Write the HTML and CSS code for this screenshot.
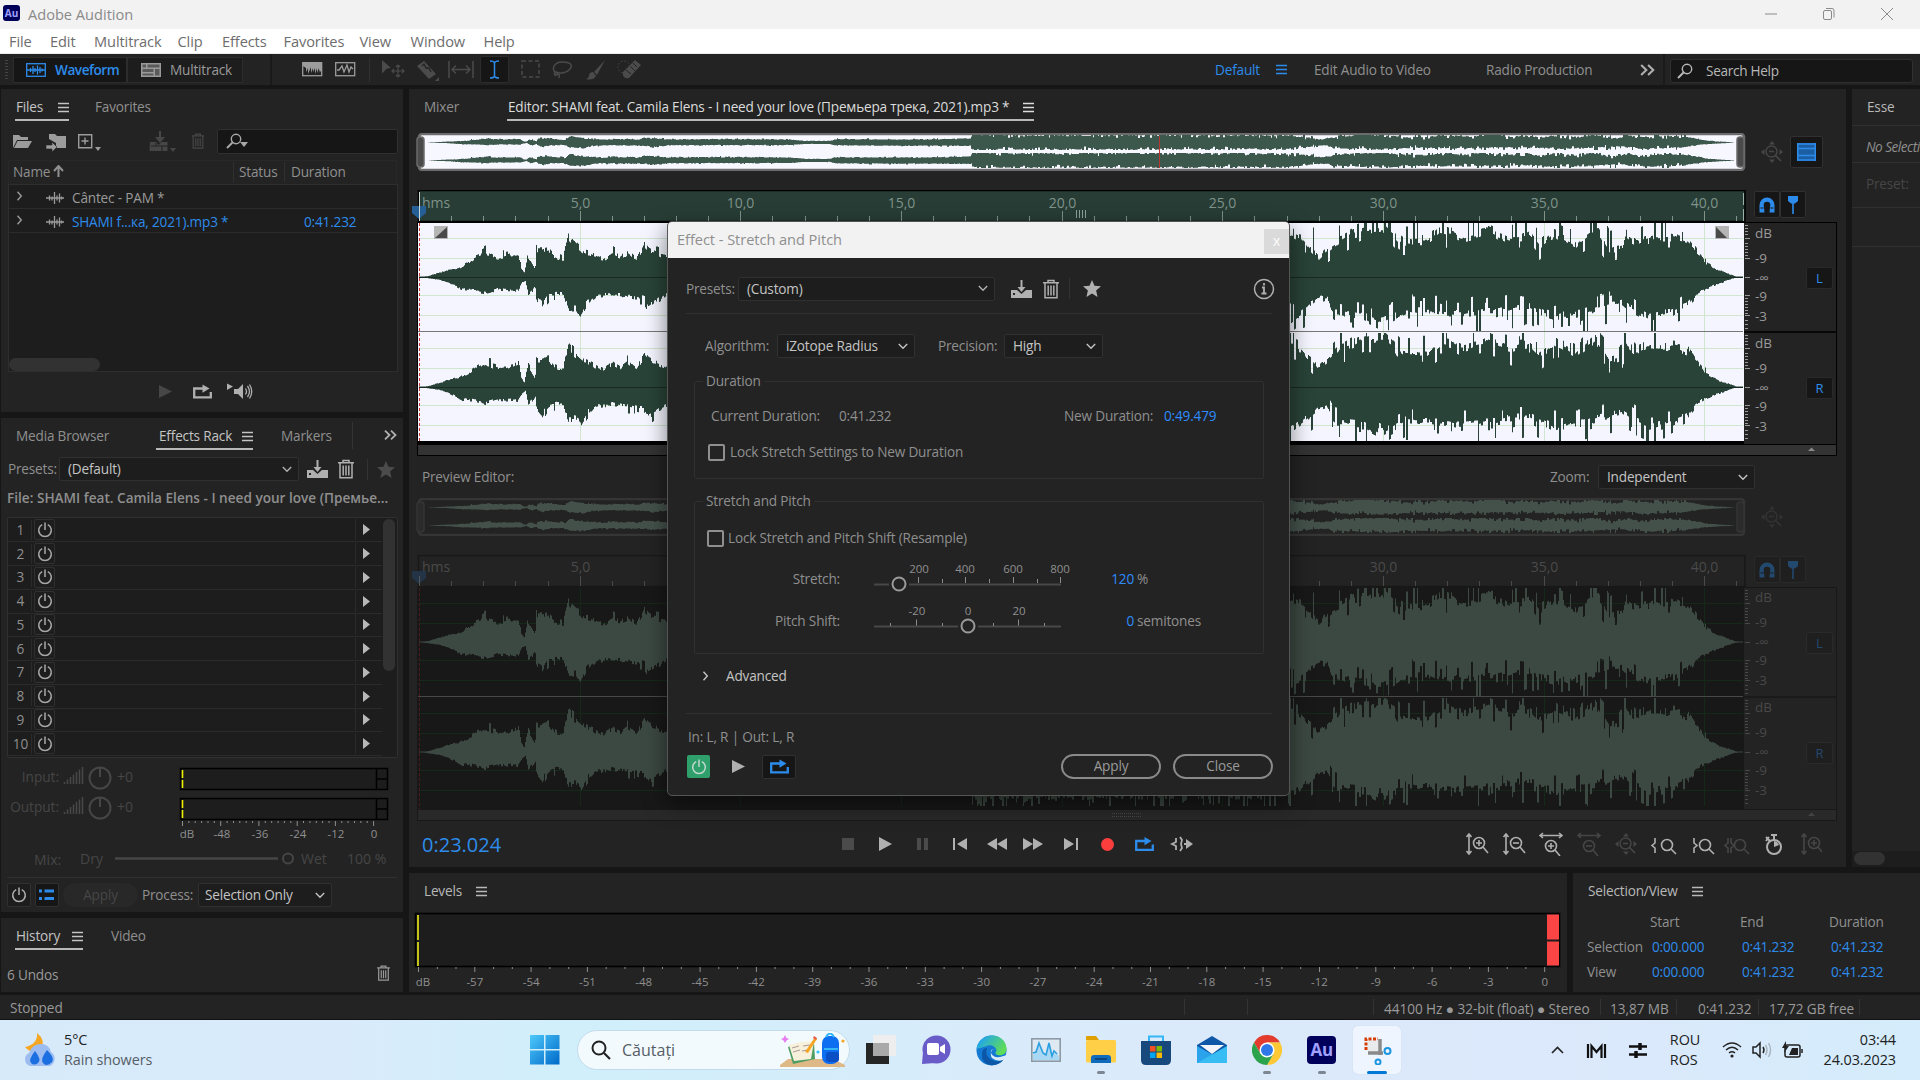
FILE: index.html
```html
<!DOCTYPE html>
<html lang="en">
<head>
<meta charset="utf-8">
<title>Adobe Audition</title>
<link rel="stylesheet" href="styles.css">
</head>
<body>
<svg class="defs" width="0" height="0">
  <symbol id="burger" viewBox="0 0 11 11"><path d="M0 1.5h11M0 5.5h11M0 9.5h11" stroke="currentColor" stroke-width="1.4"/></symbol>
  <symbol id="chev" viewBox="0 0 10 7"><path d="M.8 1l4.2 4.2L9.2 1" fill="none" stroke="currentColor" stroke-width="1.4"/></symbol>
  <symbol id="chevr" viewBox="0 0 7 10"><path d="M1.5 .8l3.8 4.2-3.8 4.2" fill="none" stroke="currentColor" stroke-width="1.4"/></symbol>
  <symbol id="more" viewBox="0 0 13 10"><path d="M1 .7l4.5 4.3L1 9.3M7 .7l4.5 4.3L7 9.3" fill="none" stroke="currentColor" stroke-width="1.8"/></symbol>
  <symbol id="power" viewBox="0 0 16 16"><path d="M5.2 2.6a6.3 6.3 0 1 0 5.6 0M8 .5v7.5" fill="none" stroke="currentColor" stroke-width="1.5"/></symbol>
  <symbol id="trash" viewBox="0 0 16 20"><path d="M0 3.7h16M5 3.5v-2h6v2M2 4v14.8h12V4M5.2 6.5v10M8 6.5v10M10.8 6.5v10" fill="none" stroke="currentColor" stroke-width="1.5"/></symbol>
  <symbol id="save" viewBox="0 0 21 18"><path d="M0 10h6l4.500 4 4.500-4h6v8H0z" fill="currentColor"/><path d="M10.500 0v10" stroke="currentColor" stroke-width="2"/><path d="M6.500 7h8l-4 5z" fill="currentColor"/><rect x="2" y="13" width="2" height="2" fill="#232323"/></symbol>
  <symbol id="star" viewBox="0 0 18 17"><path d="M9 0l2.500 5.800 6.500.5-4.900 4.200 1.500 6.500L9 13.500 3.400 17l1.500-6.500L0 6.300l6.500-.5z" fill="currentColor"/></symbol>
  <symbol id="play" viewBox="0 0 13 13"><path d="M0 0l13 6.500L0 13z" fill="currentColor"/></symbol>
  <symbol id="loop" viewBox="0 0 19 14"><path d="M5 4H1.200v8.800h16.600V7.500M4 4h7" fill="none" stroke="currentColor" stroke-width="2.300"/><path d="M9.500 0l7 4-7 4.300z" fill="currentColor"/></symbol>
  <symbol id="speaker" viewBox="0 0 27 16"><path d="M0 0l6 3-6 3.500zM7 5.500h4l5-5v15l-5-5H7z" fill="currentColor"/><path d="M18.500 5q2 3 0 6M20.500 2.500q4 5.500 0 11M22.500 1q4.500 7 0 14" fill="none" stroke="currentColor" stroke-width="1.300"/></symbol>
  <symbol id="mag" viewBox="0 0 16 16"><circle cx="10" cy="6" r="4.700" fill="none" stroke="currentColor" stroke-width="1.400"/><path d="M6.500 9.500L1 15" stroke="currentColor" stroke-width="2"/></symbol>
  <symbol id="wave" viewBox="0 0 18 12"><path d="M0 6h18M3.500 3.500v5M6 4.500v4M8.500 0v12M11 3.500v5M13.500 1.500v9M15.500 4.500v3" stroke="currentColor" stroke-width="1.300"/></symbol>
  <symbol id="navz" viewBox="0 0 22 22"><path d="M11 0l3 3.500H8zM11 22l3-3.500H8zM0 11l3.500-3v6zM22 11l-3.500-3v6z" fill="currentColor"/><circle cx="10.500" cy="10.500" r="5.500" fill="none" stroke="currentColor" stroke-width="1.400"/><path d="M8 10.500h5M14.500 14.500l5.500 5.500" stroke="currentColor" stroke-width="1.700"/></symbol>
  <symbol id="magnet" viewBox="0 0 16 16"><path d="M.5 15.500V8a7.500 7.500 0 0 1 15 0v7.500h-5l.8-7.500a3.300 3.300 0 0 0-6.600 0l.8 7.500z" fill="currentColor"/><path d="M1.500 11h3M11.500 11h3" stroke="#161616"/></symbol>
  <symbol id="pin" viewBox="0 0 10 18"><path d="M0 0h10v5L7 7.500H3L0 5z" fill="currentColor"/><path d="M5 6v12" stroke="currentColor" stroke-width="1.600"/></symbol>
</svg>

<header class="titlebar">
  <span class="aulogo small">Au</span><span class="title">Adobe Audition</span>
  <svg class="winbtns" viewBox="0 0 132 14"><path d="M3 7h12M119 1l12 12M131 1l-12 12" stroke="#8a8a8a" fill="none"/><rect x="61.500" y="3.500" width="8" height="9" rx="1.500" fill="none" stroke="#8a8a8a"/><path d="M64 1.500h6q2 0 2 2v7" fill="none" stroke="#8a8a8a"/></svg>
</header>
<nav class="menubar"><span>File</span><span>Edit</span><span>Multitrack</span><span>Clip</span><span>Effects</span><span>Favorites</span><span>View</span><span>Window</span><span>Help</span></nav>

<div class="toolbar">
  <span class="dots"></span>
  <div class="mode on"><svg width="20" height="14" viewBox="0 0 20 14"><rect x=".7" y=".7" width="18.600" height="12.600" fill="none" stroke="currentColor" stroke-width="1.300"/><path d="M1 7h18M4.500 5v4M7 3v8M9 5v4M11.500 2.500v9M14 4v6M16 5.500v3" stroke="currentColor" stroke-width="1.300"/></svg><span>Waveform</span></div>
  <div class="mode multi"><svg width="20" height="14" viewBox="0 0 20 14"><path d="M0 0h20v14H0z" fill="#9a9a9a"/><path d="M1.500 1.500h3.500v3h-3.500zM6.500 1.500h12v3h-12zM1.500 6h11v3h-11zM14 6h4.500v6.500H14zM1.500 10.500h11v2h-11z" fill="#5a5a5a"/></svg><span>Multitrack</span></div>
  <i class="vline v1"></i>
  <svg class="tools" width="370" height="31" viewBox="0 0 370 31">
    <g fill="none" stroke="#9c9c9c"><rect x="28.700" y="8.700" width="19" height="13" stroke-width="1.300"/><path d="M29 8h19v8l-2 2v-3l-1 4v-5l-2 5v-5l-2 6v-6l-2 4v-4l-2 5v-6l-3 7v-6l-2 4v-4l-3-2z" fill="#9c9c9c" stroke="none"/><rect x="61.700" y="8.700" width="19" height="13" stroke-width="1.300"/><path d="M63 16l2 0 3-4 2 6 3-7 2 7 2-5 2 2" stroke-width="1.300"/></g>
    <path d="M95.500 3v25" stroke="#303030"/>
    <g fill="#4b4b4b" stroke="#4b4b4b">
      <path d="M108 6l9 8-4 .500-5 5z" stroke="none"/><path d="M124 11v12M118 17h12M122 13l2-2 2 2M122 21l2 2 2-2M120 15l-2 2 2 2M128 15l2 2-2 2" fill="none" stroke-width="1.200"/>
      <path d="M143 12l7-5 12 13-7 5z" stroke="none"/><path d="M148 12l2-2 2 4 3 0 2 4" stroke="#232323" stroke-width="1.300" fill="none"/><path d="M161 27h4v-4z" stroke="none"/>
      <path d="M175 7v17M199 7v17M178 15.500h18M182 11.500l-4 4 4 4M192 11.500l4 4-4 4" fill="none" stroke-width="1.500"/>
    </g>
    <rect x="206.500" y="2.500" width="28" height="26" rx="2" fill="#161616" stroke="#2c2c2c"/>
    <path d="M216 7q4 0 4.500 2 .5-2 4.500-2M216 24q4 0 4.500-2 .5 2 4.500 2M220.500 9v13" fill="none" stroke="#2d8ceb" stroke-width="1.500"/>
    <g fill="none" stroke="#4b4b4b" stroke-width="1.500"><rect x="248" y="7" width="17" height="16" stroke-dasharray="4 2.500"/><path d="M284 19c-8-1-5-11 4-11s11 3 8 7-10 5-14 3c-2 0-2 4 0 3s4-2 3 3"/></g>
    <path d="M331 6l-11 12 3 3zM319 18l3 4q-3 5-10 3 3-1 3-4 1-3 4-3z" fill="#4b4b4b"/>
    <path d="M349 18l12-12 6 5-12 13q-3 1-5-1t-1-5z" fill="#4b4b4b"/><path d="M352 16l5 4M356 12l5 5M359 9l4 4" stroke="#232323"/><circle cx="350" cy="13" r="6" fill="none" stroke="#4b4b4b" stroke-dasharray="1.500 2"/>
  </svg>
  <div class="spaces"><span class="blue">Default</span><svg class="ic blue" width="11" height="11"><use href="#burger"/></svg><span>Edit Audio to Video</span><span>Radio Production</span><svg class="ic lite" width="15" height="12"><use href="#more"/></svg></div>
  <i class="vline v2"></i>
  <div class="search"><svg width="16" height="16"><use href="#mag"/></svg><span>Search Help</span></div>
</div>

<main class="work">
  <section class="left">
    <div class="panel files">
      <div class="tabs t-files"><span class="tab on">Files <svg class="ic" width="11" height="11"><use href="#burger"/></svg></span><span class="tab">Favorites</span></div>
      <div class="filetools">
        <svg width="198" height="24" viewBox="0 0 198 24">
          <g fill="#9c9c9c"><path d="M5 6h6l2 2h7v3H9l-4 8z"/><path d="M9.500 12H24l-4 7H6z"/><path d="M41 5h6l2 2h9v12H48v-5l-7-4z"/><path d="M38 20v-4h6v-3l5 5-5 5v-3z" stroke="#232323" stroke-width=".6"/><path d="M87 18h6l-3 4z"/></g>
          <path d="M70.700 5.700h13v13h-13zM77 8.500v7M73.500 12h7" fill="none" stroke="#9c9c9c" stroke-width="1.400"/>
          <g fill="#464646"><path d="M142 13h6l2.500 3 3-3h6v9h-18z"/><path d="M153 2v6h4l-5 6-5-6h4V2zM162 19h6l-3 4z"/></g><path d="M143 17h17M148 17v-3M154 22v-5" stroke="#232323"/>
        </svg>
        <svg class="dim trash1" width="14" height="16" viewBox="0 0 16 20"><use href="#trash"/></svg>
        <div class="box fsearch"><svg width="16" height="16"><use href="#mag"/></svg><b class="tri"></b></div>
      </div>
      <div class="thead"><span>Name<svg width="11" height="12" viewBox="0 0 11 12"><path d="M5.500 12V2M1 6l4.500-5L10 6" fill="none" stroke="currentColor" stroke-width="2"/></svg></span><span>Status</span><span>Duration</span></div>
      <div class="flist">
        <div class="frow"><svg width="7" height="10"><use href="#chevr"/></svg><svg width="18" height="12"><use href="#wave"/></svg><span>Cântec - PAM *</span></div>
        <div class="frow"><svg width="7" height="10"><use href="#chevr"/></svg><svg width="18" height="12"><use href="#wave"/></svg><span class="blue">SHAMI f...ка, 2021).mp3 *</span><span class="blue">0:41.232</span></div>
        <div class="hthumb"></div>
      </div>
      <div class="fplay"><svg class="dim" width="13" height="13"><use href="#play"/></svg><svg width="19" height="15"><use href="#loop"/></svg><svg width="27" height="17"><use href="#speaker"/></svg></div>
    </div>

    <div class="panel rack">
      <div class="tabs t-rack"><span class="tab">Media Browser</span><span class="tab on">Effects Rack <svg class="ic" width="11" height="11"><use href="#burger"/></svg></span><span class="tab">Markers</span><i class="tline"></i><svg class="ic lite" width="13" height="10"><use href="#more"/></svg></div>
      <div class="presets"><span>Presets:</span><div class="box sel">(Default)<svg width="10" height="7"><use href="#chev"/></svg></div><svg width="21" height="18"><use href="#save"/></svg><svg width="16" height="20"><use href="#trash"/></svg><i class="sline"></i><svg class="dim" width="18" height="17"><use href="#star"/></svg></div>
      <div class="rfile">File: SHAMI feat. Camila Elens - I need your love (Премье...</div>
      <div class="rlist"><div class="rows" id="rackRows"></div><div class="vthumb"></div></div>
      <svg class="io" width="402" height="120" viewBox="0 0 402 120" id="ioMeters"></svg>
      <div class="rfoot"><span class="sq"><svg width="16" height="16"><use href="#power"/></svg></span><span class="sq ondark"><svg width="16" height="12" viewBox="0 0 16 12"><path d="M0 2h3M0 9.500h3M5.500 2H15M5.500 9.500H15" stroke="#2d8ceb" stroke-width="3"/></svg></span><span class="gpill">Apply</span><span>Process:</span><div class="box sel">Selection Only<svg width="10" height="7"><use href="#chev"/></svg></div></div>
    </div>

    <div class="panel hist">
      <div class="tabs t-hist"><span class="tab on">History <svg class="ic" width="11" height="11"><use href="#burger"/></svg></span><span class="tab">Video</span></div>
      <div class="undos"><span>6 Undos</span><svg width="13" height="16" viewBox="0 0 16 20"><use href="#trash"/></svg></div>
    </div>
  </section>

  <section class="mid">
    <div class="panel editor">
      <div class="tabs t-edit"><span class="tab">Mixer</span><span class="tab on bright">Editor: SHAMI feat. Camila Elens - I need your love (Премьера трека, 2021).mp3 * <svg class="ic" width="11" height="11"><use href="#burger"/></svg></span></div>
      <div class="ovrow"><svg class="ov" width="1330" height="38" data-overview="main"></svg><svg class="dim navz" width="22" height="22"><use href="#navz"/></svg><span class="sq big"><svg width="19" height="18" viewBox="0 0 19 18"><path d="M0 0h19v18H0z" fill="#1c5ea3"/><path d="M0 1h19M0 5.500h19M0 12.500h19M0 17h19M.7 0v18M18.300 0v18" stroke="#2d8ceb" stroke-width="1.600"/></svg></span></div>
      <div class="rulerrow"><svg class="ruler" width="1336" height="32" data-ruler="main"></svg><span class="sq tg"><svg width="16" height="16"><use href="#magnet"/></svg></span><span class="sq tg"><svg width="10" height="18"><use href="#pin"/></svg></span></div>
      <svg class="wave" width="1421" height="234" data-wave="main"></svg>
      <div class="prevhead"><span>Preview Editor:</span><span class="zl">Zoom:</span><div class="box sel">Independent<svg width="10" height="7"><use href="#chev"/></svg></div></div>
      <div class="ovrow"><svg class="ov" width="1330" height="38" data-overview="dim"></svg><svg class="dim navz faint" width="22" height="22"><use href="#navz"/></svg></div>
      <div class="rulerrow faded"><svg class="ruler" width="1336" height="32" data-ruler="dim"></svg><span class="sq tg"><svg width="16" height="16"><use href="#magnet"/></svg></span><span class="sq tg"><svg width="10" height="18"><use href="#pin"/></svg></span></div>
      <svg class="wave" width="1421" height="234" data-wave="dim"></svg>
      <div class="transport">
        <span class="time">0:23.024</span>
        <svg class="tbtns" width="352" height="18" viewBox="0 0 352 18"><g fill="#b0b0b0"><path d="M0 3h12v12H0zM75 3h4v12h-4zM82 3h4v12h-4z" fill="#4b4b4b"/><path d="M37 2l13 7-13 7zM111 3h2v12h-2zM125 3v12l-10-6zM155 3v12l-10-6zM165 3v12l-10-6zM181 3v12l10-6zM191 3v12l10-6zM222 3v12l10-6zM234 3h2v12h-2z"/></g><circle cx="265.500" cy="9.500" r="6.500" fill="#fa3e3e"/><g color="#2d8ceb"><svg x="293" y="2" width="19" height="14"><use href="#loop"/></svg></g><path d="M334 3v4l-4 2 4 2v4M338 2l2 3-1 4 1 4-2 3M342 9h6" fill="none" stroke="#b0b0b0" stroke-width="1.800"/><path d="M344 4l7 5-7 5z" fill="#b0b0b0"/></svg>
        <svg class="zbtns" width="356" height="24" viewBox="0 0 356 24" id="zoomIcons"></svg>
      </div>
    </div>
    <div class="lower">
      <div class="panel levels"><div class="ptitle">Levels <svg class="ic" width="11" height="11"><use href="#burger"/></svg></div><svg width="1158" height="84" viewBox="0 0 1158 84" id="levelMeter"></svg></div>
      <div class="panel selview"><div class="ptitle">Selection/View <svg class="ic" width="11" height="11"><use href="#burger"/></svg></div>
        <div class="svgrid"><span></span><span class="h">Start</span><span class="h">End</span><span class="h">Duration</span><span>Selection</span><span class="blue">0:00.000</span><span class="blue">0:41.232</span><span class="blue">0:41.232</span><span>View</span><span class="blue">0:00.000</span><span class="blue">0:41.232</span><span class="blue">0:41.232</span></div>
      </div>
    </div>
  </section>

  <section class="panel right"><div class="r1">Esse</div><div class="r2">No Selecti</div><div class="r3">Preset:</div><div class="r4"></div><div class="rscroll"><i></i></div></section>
</main>

<footer class="status"><span class="stopped">Stopped</span><span class="s1"></span><span class="s2"></span><span class="s3">44100 Hz ● 32-bit (float) ● Stereo</span><span class="s4">13,87 MB</span><span class="s5">0:41.232</span><span class="s6">17,72 GB free</span><span class="s7"></span></footer>

<div class="taskbar">
  <svg class="weather" width="32" height="36" viewBox="0 0 32 36"><path d="M13 1q1 11-12 14 5 6 13 4 8-5 3-14-2-2-4-4z" fill="#f5a623"/><path d="M6 34a7 7 0 0 1-1-13q3-9 12-9 8 0 10 8a8 8 0 0 1-1 14z" fill="#9dbdf0"/><path d="M11 19q-7 9-4 12t7 0-3-12zM23 18q-7 9-4 13t8 0-4-13z" fill="#1b6fe0"/></svg>
  <div class="wtext"><span class="dark">5°C</span><span>Rain showers</span></div>
  <svg class="start" width="30" height="30"><defs><linearGradient id="wg" x1="0" y1="0" x2="1" y2="1"><stop offset="0" stop-color="#4cc9fb"/><stop offset="1" stop-color="#0069c8"/></linearGradient></defs><path d="M0 0h14v14H0zM15.500 0h14v14h-14zM0 15.500h14v14H0zM15.500 15.500h14v14h-14z" fill="url(#wg)"/></svg>
  <div class="tsearch"><svg width="20" height="20" viewBox="0 0 20 20"><circle cx="8" cy="8" r="6.500" fill="none" stroke="#222" stroke-width="2"/><path d="M13 13l6 6" stroke="#222" stroke-width="2.200"/></svg><span>Căutați</span>
    <svg class="art" width="66" height="34" viewBox="0 0 66 34"><path d="M8 26h45l12 6v2H0v-2z" fill="#deb887"/><path d="M8 14l10-4 16 0 1 16-22 5z" fill="#4f9d62"/><path d="M9 12l12-3 13-1-3 18-17 2z" fill="#f7f1dc"/><path d="M12 15l7-2M13 19l7-2M23 13l7-1M22 18l6-1" stroke="#a99"/><path d="M35 4l2 2-9 14-3-1z" fill="#f5a623"/><path d="M34 3l3 2-1 2-3-2z" fill="#e85a4f"/><rect x="42" y="3" width="17" height="28" rx="7" fill="#0d6ef2"/><rect x="46" y="19" width="13" height="10" rx="3" fill="#0a4fc4"/><path d="M46 4q4-7 8 0M44 16h14" stroke="#35b6f5" stroke-width="2" fill="none"/><path d="M5 2l1.500 3L9 6 6.500 7.500 5 10 3.500 7.500 1 6l2.500-1z" fill="#e67cf0"/><circle cx="38" cy="19" r="1.600" fill="#35c6f5"/><circle cx="63" cy="8" r="1.600" fill="#f5a623"/></svg>
  </div>
  <div class="apps">
    <span><svg width="30" height="30"><path d="M0 8h23v21H0z" fill="#262626"/><path d="M7 0h23v21H7z" fill="#eee"/><path d="M7 8h16v13H7z" fill="#a9a9a9"/></svg></span>
    <span><svg width="30" height="30"><circle cx="15.500" cy="14.500" r="14" fill="#6a5cc8"/><path d="M1 29l1-12 12 11z" fill="#6a5cc8"/><rect x="6" y="8" width="12" height="12" rx="2" fill="#fff"/><path d="M19 12l5-3v10l-5-3z" fill="#fff"/></svg></span>
    <span><svg width="31" height="31" viewBox="0 0 31 31"><defs><linearGradient id="eg" x1="0" y1="0" x2="1" y2=".5"><stop offset=".2" stop-color="#22a7e8"/><stop offset="1" stop-color="#5fdc58"/></linearGradient></defs><circle cx="15.500" cy="15.500" r="15" fill="#1479d2"/><path d="M.5 14C3-4 30-4 30.500 14c0 5-4 7-9 6-2-1-3-2-1-4 0-4-5-7-10-5S2 13 .5 14z" fill="url(#eg)"/><path d="M11 13q-3 8 5 12 6 3 12-1-5 7-14 6-9-2-8-11 0-6 5-6z" fill="#0d57a8"/><path d="M19 14q-5 0-4 4 2 5 9 4l7-2v3l-4 2q-6 2-11-2-3-5 1-9z" fill="#dcebf9"/></svg></span>
    <span><svg width="30" height="24"><rect x=".8" y=".8" width="28.400" height="22.400" fill="#dfe9f2" stroke="#8c9aa6" stroke-width="1.600"/><path d="M2 17l4-4 2-8 4 10 3 2 3-12 3 12 4-2 3 3v4H2z" fill="#a8d8f4"/><path d="M2 15l3-1 3-9 4 10 3 2 3-12 3 13 2-5 3 3" fill="none" stroke="#2b9fe0" stroke-width="1.600"/></svg></span>
    <span class="run"><svg width="30" height="28"><path d="M0 1q0-1 1-1h9l3 4H0z" fill="#e0a000"/><rect y="4" width="30" height="22.500" rx="1.500" fill="#ffcf48"/><path d="M5 27v-5q0-3 3-3h14q3 0 3 3v5z" fill="#0f6cbd"/><path d="M9 23h12" stroke="#0a3f75" stroke-width="1.600"/></svg></span>
    <span><svg width="30" height="30"><path d="M8 6V1.500h14V6" fill="none" stroke="#35b6f5" stroke-width="2"/><path d="M0 6h30v19q0 5-5 5H5q-5 0-5-5z" fill="#17497d"/><path d="M9 11h5.500v5.500H9z" fill="#f25022"/><path d="M15.500 11H21v5.500h-5.500z" fill="#7fba00"/><path d="M9 17.500h5.500V23H9z" fill="#00a4ef"/><path d="M15.500 17.500H21V23h-5.500z" fill="#ffb900"/></svg></span>
    <span><svg width="30" height="30"><path d="M0 10L15 1l15 9v18H0z" fill="#0f58a8"/><path d="M0 11l30 17H0z" fill="#2aa3ec"/><path d="M30 11L0 28h30z" fill="#37bdf3"/><path d="M3 10h24L15 19z" fill="#f2f6fa"/></svg></span>
    <span class="run"><svg width="30" height="30" viewBox="-15 -15 30 30"><path d="M-13-7.500A15 15 0 0 1 13-7.500H0L-6.500 3.800z" fill="#e33b2e"/><path d="M13-7.500A15 15 0 0 1 0 15L6.500 3.800 0-7.500z" fill="#fcc934"/><path d="M-13-7.500A15 15 0 0 0 0 15L6.500 3.800h-13z" fill="#2ba24c"/><circle r="7.500" fill="#fff"/><circle r="6" fill="#2f78e8"/></svg></span>
    <span class="run"><b class="aulogo">Au</b></span>
    <span class="active"><svg width="30" height="30"><path d="M4 15V4h12" fill="none" stroke="#d83b01" stroke-width="3" stroke-dasharray="3 1.500"/><path d="M6 6h12v11H6z" fill="#e9eaec"/><path d="M18 4v16M6 18h15" stroke="#8a8a8a" stroke-width="3.500"/><circle cx="25.500" cy="16" r="3" fill="none" stroke="#1b95e0" stroke-width="2"/><circle cx="16" cy="27" r="2.500" fill="none" stroke="#1b95e0" stroke-width="2"/></svg></span>
  </div>
  <svg class="tray" width="100" height="18" viewBox="0 0 100 18"><path d="M2 12l5.500-5.500L13 12" fill="none" stroke="#222" stroke-width="1.600"/><path d="M38 3v14M55 3v14M41.500 17V5l5 6 5-6v12" stroke="#111" stroke-width="2.200" fill="none"/><path d="M79 5.500h18M79 13.500h18" stroke="#111" stroke-width="2.400"/><path d="M90 2v7M86 10v7" stroke="#111" stroke-width="3.500"/></svg>
  <div class="lang"><span>ROU</span><span>ROS</span></div>
  <svg class="sys" width="82" height="20" viewBox="0 0 82 20"><g fill="none" stroke="#222" stroke-width="1.500"><path d="M1 7q9-8 18 0M4 10q6-5.500 12 0M7 13q3-2.500 6 0"/><path d="M31 7h3l4-4v14l-4-4h-3zM41 7q2 3 0 6"/><path d="M43.500 5q3 5 0 10M46.500 3q4 7 0 14" stroke="#aab5bf"/><rect x="63" y="5" width="15" height="12" rx="2"/><path d="M80 9v4"/></g><circle cx="10" cy="16" r="1.600" fill="#222"/><path d="M70 8h6v7h-9zM64 1l-4 7h3l-1 5 5-7h-3z" fill="#222"/></svg>
  <div class="clock"><span>03:44</span><span>24.03.2023</span></div>
</div>

<div class="dialog">
  <div class="dtitle"><span>Effect - Stretch and Pitch</span><b>x</b></div>
  <div class="dbody">
    <div class="dpresets"><span>Presets:</span><div class="box sel">(Custom)<svg width="10" height="7"><use href="#chev"/></svg></div><svg width="21" height="18"><use href="#save"/></svg><svg width="16" height="20"><use href="#trash"/></svg><i class="sline"></i><svg width="18" height="17"><use href="#star"/></svg><svg class="info" width="22" height="22"><circle cx="11" cy="11" r="9.500" fill="none" stroke="currentColor" stroke-width="1.500"/><path d="M11 5v2.500M9 9.500h2v6M8.500 15.500h5" fill="none" stroke="currentColor" stroke-width="1.800"/></svg></div>
    <div class="algo"><span>Algorithm:</span><div class="box sel">iZotope Radius<svg width="10" height="7"><use href="#chev"/></svg></div><span>Precision:</span><div class="box sel">High<svg width="10" height="7"><use href="#chev"/></svg></div></div>
    <div class="group g1"><span class="legend">Duration</span>
      <div class="durs"><span>Current Duration:</span><span>0:41.232</span><span>New Duration:</span><span class="hot">0:49.479</span></div>
      <div class="check"><i></i><span>Lock Stretch Settings to New Duration</span></div>
    </div>
    <div class="group g2"><span class="legend">Stretch and Pitch</span>
      <div class="check"><i></i><span>Lock Stretch and Pitch Shift (Resample)</span></div>
      <div class="slide"><span class="sl">Stretch:</span><svg width="210" height="36" viewBox="0 0 210 36"><path d="M7 25.500h15M42 25.500h152" stroke="#484848" stroke-width="2"/><path d="M51.500 18v6M75.500 20v4M98.500 18v6M122.500 20v4M146.500 18v6M170.500 20v4M193.500 18v6" stroke="#8c8c8c"/><circle cx="32" cy="25" r="6.500" fill="none" stroke="#9a9a9a" stroke-width="2"/><g class="tiny"><text x="52" y="14">200</text><text x="98" y="14">400</text><text x="146" y="14">600</text><text x="193" y="14">800</text></g></svg><span class="val hot">120</span><span>%</span></div>
      <div class="slide"><span class="sl">Pitch Shift:</span><svg width="210" height="36" viewBox="0 0 210 36"><path d="M7 25.500h84M111 25.500h83" stroke="#484848" stroke-width="2"/><path d="M23.500 22v3M49.500 18.500v6M75.500 22v3M126.500 22v3M151.500 18.500v6M177.500 22v3" stroke="#8c8c8c"/><circle cx="101" cy="25" r="6.500" fill="none" stroke="#9a9a9a" stroke-width="2"/><g class="tiny"><text x="50" y="14">-20</text><text x="101" y="14">0</text><text x="152" y="14">20</text></g></svg><span class="val hot">0</span><span>semitones</span></div>
    </div>
    <div class="adv"><svg width="7" height="10"><use href="#chevr"/></svg><span>Advanced</span></div>
    <div class="inout">In: L, R | Out: L, R</div>
    <div class="dfoot"><span class="green"><svg width="16" height="16"><use href="#power"/></svg></span><svg class="dplay" width="13" height="13"><use href="#play"/></svg><span class="sq dloop"><svg width="19" height="15"><use href="#loop"/></svg></span><span class="pill">Apply</span><span class="pill">Close</span></div>
  </div>
</div>
<script src="app.js"></script>
</body>
</html>
```
FILE: styles.css
```css
* { box-sizing: border-box; }
body { margin: 0; width: 1920px; height: 1080px; overflow: hidden; background: #161616; color: #8f8f8f; font-family: "Open Sans", "Noto Sans", sans-serif; font-size: 13.600px; font-stretch: 90%; letter-spacing: -.18px; line-height: 20px; white-space: nowrap; position: relative; display: flex; flex-direction: column; }
svg { display: block; flex: none; }
.defs { position: absolute; }
.blue { color: #2d8ceb; }
.hot { color: #2d8cff; }
.dim { color: #464646; }
.lite { color: #b0b0b0; }
.box { background: #1d1d1d; border: 1px solid #303030; border-radius: 2px; }
.sel { height: 24px; color: #c4c4c4; display: flex; align-items: center; justify-content: space-between; padding: 0 6px 0 8px; }
.sq { width: 24px; height: 24px; border: 1px solid #303030; border-radius: 2px; display: flex; align-items: center; justify-content: center; background: #1d1d1d; color: #b0b0b0; }
.panel { background: #232323; }

.titlebar { height: 29px; flex: none; background: #f2f2f2; display: flex; align-items: center; padding: 0 26px 1px 3px; color: #8a8a8a; font-size: 14.600px; letter-spacing: 0; }
.aulogo { background: #00005b; color: #a0a0ff; border-radius: 4px; width: 29px; height: 28px; font-size: 17px; font-weight: 700; display: flex; align-items: center; justify-content: center; }
.aulogo.small { width: 17px; height: 16px; font-size: 10px; border-radius: 3px; margin-top: -2px; }
.title { margin-left: 8px; }
.winbtns { width: 132px; height: 14px; margin-left: auto; }
.menubar { height: 25px; flex: none; background: #fff; border-bottom: 1px solid #ececec; display: grid; grid-template-columns: 41px 44px 83.500px 44.500px 61.500px 76px 51px 73px 60px; padding-left: 9px; align-items: center; color: #6d6d6d; font-size: 14.600px; letter-spacing: -.1px; }

.toolbar { height: 31px; flex: none; background: #232323; display: flex; align-items: center; }
.dots { width: 3px; height: 20px; margin: 0 5px; background: repeating-linear-gradient(#444 0 1px, transparent 1px 3px); }
.mode { height: 26px; border: 1px solid #2c2c2c; display: flex; align-items: center; background: #1d1d1d; width: 116px; padding-left: 13px; gap: 9px; }
.mode.on { background: #161616; color: #2d8ceb; width: 114px; padding-left: 12px; font-weight: 600; letter-spacing: -.45px; }
.multi { color: #9a9a9a; }
.vline { width: 2px; height: 31px; background: #1a1a1a; }
.v1 { margin-left: 27px; }
.tools { margin-left: 2px; }
.spaces { margin-left: auto; display: grid; grid-template-columns: 61px 38px 172px 154px 28px; align-items: center; }
.v2 { margin-left: -5px; }
.search { margin: 2px 7px 0 5px; width: 243px; height: 24px; background: #161616; border: 1px solid #303030; display: flex; align-items: center; padding-left: 6px; gap: 13px; color: #b8b8b8; border-radius: 3px; letter-spacing: -.3px; }

.work { flex: none; margin-top: 4px; height: 903px; display: grid; grid-template-columns: 402px 1437px 68px; column-gap: 6px; padding-left: 1px; position: relative; }
.left { display: grid; grid-template-rows: 323px 494px 74px; row-gap: 6px; }
.tabs { display: grid; height: 37px; padding-top: 8px; align-items: start; }
.tab.on { color: #c4c4c4; display: flex; align-items: center; justify-content: space-between; height: 24px; padding: 0 0 2px 1px; margin-left: -1px; border-bottom: 2px solid #b8b8b8; }
.tab.bright { color: #dcdcdc; }
.ic { flex: none; }
.t-files { grid-template-columns: 53px 60px; column-gap: 26px; padding-left: 15px; }

.filetools { display: flex; margin-top: 3px; height: 24px; align-items: center; padding-left: 7px; }
.trash1 { margin-left: -15px; }
.fsearch { width: 181px; height: 25px; margin-left: 12px; background: #161616; display: flex; align-items: center; padding-left: 8px; color: #a8a8a8; }
.tri { border: 4px solid transparent; border-top: 5px solid #a8a8a8; border-bottom: 0; margin-top: 6px; margin-left: -2px; }
.thead { display: grid; grid-template-columns: 220px 51px 100px; margin: 7px 6px 0 7px; height: 24px; padding-bottom: 1px; align-items: center; border: 1px solid #282828; border-bottom: 0; padding-left: 4px; }
.thead span + span { border-left: 1px solid #303030; padding-left: 5px; }
.thead span:last-child { padding-left: 6px; }
.thead span svg { display: inline-block; margin-left: 3px; }
.flist { height: 188px; margin: 0 5px 0 7px; background: #1d1d1d; border: 1px solid #2e2e2e; display: flex; flex-direction: column; }
.frow { height: 24px; border-bottom: 1px solid #2b2b2b; display: grid; grid-template-columns: 30px 26px 232px 60px; padding: 2px 0 0 7px; align-items: center; color: #9a9a9a; }
.frow svg:first-child { margin-top: -4px; }
.hthumb { margin-top: auto; width: 91px; height: 13px; border-radius: 7px; background: #323232; }
.fplay { display: grid; grid-template-columns: 34px 34px 30px; padding-left: 158px; margin-top: 11px; color: #b0b0b0; align-items: center; }

.t-rack { grid-template-columns: 143px 122px 53px 50px 14px; padding-left: 15px; }
.t-rack .on { width: 97px; padding-left: 3px; margin-left: -3px; }
.t-rack > .lite { margin-top: 4px; }
.t-rack .tline { width: 1px; height: 27px; margin: -4px 0 0 18px; background: #333; }
.presets { display: grid; grid-template-columns: 51px 248px 31px 29px 10px 18px; padding: 2px 0 0 7px; align-items: center; color: #8f8f8f; }
.presets .box { width: 240px; }
.presets svg, .dpresets svg { color: #b0b0b0; }
.presets .dim { color: #4b4b4b; }
.sline { width: 1px; height: 21px; background: #333; }
.rfile { font-weight: 600; height: 36px; line-height: 33px; padding-left: 6px; letter-spacing: 0; }
.rlist { height: 241px; margin: 0 5px 0 6px; border: 1px solid #303030; background: #1d1d1d; border-radius: 2px; display: flex; }
.rows { width: 374px; padding-top: .5px; }
.rrow { height: 23.750px; border-bottom: 1px solid #2b2b2b; display: grid; grid-template-columns: 24px 323px 25px; align-items: center; }
.rrow span { border-right: 1px solid #2b2b2b; text-align: right; padding-right: 7px; height: 20px; }
.rrow span.ten { padding-right: 3px; }
.rrow .pw { width: 21px; height: 21px; border: 1px solid #303030; margin-left: 2px; border-radius: 2px; display: flex; align-items: center; justify-content: center; color: #a8a8a8; }
.rrow .ar { border-left: 1px solid #2b2b2b; height: 21px; padding: 5px 0 0 7px; color: #b8b8b8; }
.vthumb { width: 12px; height: 152px; border-radius: 6px; background: #323232; margin: 1px 0 0 1px; }
.rfoot { display: grid; grid-template-columns: 28px 28px 79px 56px 134px; padding-left: 6px; margin-top: 5px; align-items: center; }
.rfoot .sel { padding-left: 6px; }
.ondark { background: #161616; }
.gpill { width: 75px; height: 24px; border-radius: 12px; background: #282828; color: #464646; text-align: center; line-height: 23px; }

.t-hist { grid-template-columns: 67px 60px; column-gap: 28px; padding-left: 15px; }
.undos { display: flex; justify-content: space-between; padding: 10px 13px 0 6px; color: #9a9a9a; }

.mid { display: grid; grid-template-columns: 1437px; grid-template-rows: 778px 119px; row-gap: 6px; }
.t-edit { grid-template-columns: 84px 526px; padding-left: 15px; height: 44px; }
.ovrow { display: flex; padding-left: 7px; align-items: center; height: 38px; }
.navz { margin-left: 15px; }
.navz.faint { color: #333; }
.sq.big { width: 33px; height: 32px; background: #161616; margin-left: 7px; }
.rulerrow { display: flex; margin-top: 19px; height: 32px; padding-left: 2px; }
.tg { width: 26px; height: 27px; margin: 1px 0 0 0; background: #161616; color: #2d8ceb; }
.ruler { margin-right: 7px; }
.faded .tg { background: #1f1f1f; color: #24496e; border-color: #292929; }
.wave { margin-left: 8px; }
.prevhead { height: 42px; display: flex; align-items: center; padding-left: 13px; }
.prevhead .zl { margin-left: auto; width: 48px; }
.prevhead .box { width: 157px; margin-right: 91px; }
.transport { height: 45px; display: flex; align-items: center; padding-left: 13px; }
.time { font-size: 20px; letter-spacing: 0; color: #2d8ceb; width: 420px; padding-top: 3px; }
.tbtns { margin-top: 1px; }
.zbtns { margin-left: auto; margin-right: 24px; }
.lower { width: 1511px; display: grid; grid-template-columns: 1158px 347px; column-gap: 6px; }
.ptitle { display: flex; align-items: center; gap: 14px; padding: 8px 0 7px 15px; color: #b8b8b8; height: 35px; }
.svgrid { display: grid; grid-template-columns: 65px 90px 89px 60px; grid-template-rows: 24px 25px 26px; padding: 2px 0 0 14px; align-items: center; }
.svgrid .h { margin-left: -2px; }

.right { height: 778px; overflow: hidden; display: flex; flex-direction: column; }
.right > div { border-bottom: 1px solid #303030; flex: none; }
.r1 { height: 37px; line-height: 36px; padding-left: 15px; color: #b8b8b8; }
.r2 { height: 37px; line-height: 42px; padding-left: 14px; font-style: italic; letter-spacing: -.5px; }
.r3 { height: 45px; line-height: 42px; padding-left: 14px; color: #464646; }
.r4 { height: 39px; }
.right > .rscroll { margin-top: auto; height: 16px; background: #1d1d1d; border: 0; padding: 1px 2px; }
.rscroll i { display: block; width: 31px; height: 13px; border-radius: 7px; background: #323232; }

.status { height: 25px; margin-top: 3px; flex: none; background: #232323; display: flex; align-items: center; padding-left: 10px; color: #9a9a9a; border-bottom: 1px solid #111; letter-spacing: -.05px; }
.status span + span { border-left: 1px solid #333; height: 16px; line-height: 19px; }
.s1 { margin-left: auto; width: 63px; }
.s2 { width: 126px; }
.s3 { width: 227px; padding-left: 10px; }
.s4 { width: 76px; padding-left: 9px; }
.s5 { width: 82px; padding-left: 21px; }
.s6 { width: 101px; padding-left: 10px; }
.s7 { width: 61px; }
.stopped { width: 60px; padding-top: 2px; }

.taskbar { height: 60px; flex: none; background: linear-gradient(90deg, #d7eafa, #d9ebfb 18%, #d0effb 30%, #d9ebfa 52%, #dce8fb 80%, #d4ecfb); display: flex; align-items: center; padding-left: 24px; color: #555d66; font-size: 14.400px; letter-spacing: -.1px; }
.wtext, .lang, .clock { display: flex; flex-direction: column; }
.wtext { margin-left: 8px; width: 466px; }
.dark { color: #222; }
.tsearch { width: 273px; height: 40px; border-radius: 20px; background: #f3fafe; border: 1px solid #c2dcec; margin-left: 17px; display: flex; align-items: center; padding-left: 13px; font-size: 16px; letter-spacing: 0; }
.tsearch span { margin-left: 11px; }
.art { margin-left: auto; margin-right: 3px; }
.apps { display: flex; margin-left: 7px; gap: 7.100px; }
.apps span { width: 48px; height: 48px; display: flex; align-items: center; justify-content: center; position: relative; border-radius: 5px; }
.apps .run::after, .apps .active::after { content: ""; position: absolute; bottom: 0; left: 20px; width: 8px; height: 3px; border-radius: 2px; background: #7d8791; }
.apps .active { background: #eef5fe; box-shadow: 0 0 1px #b9cbe0; }
.apps .active::after { left: 14px; width: 20px; background: #0078d4; }
.tray { margin-left: 149px; }
.lang { margin-left: 20px; color: #222; width: 50px; }
.sys { margin-left: 2px; }
.clock { margin-left: auto; margin-right: 24px; color: #222; text-align: right; }

.dialog { position: absolute; left: 667px; top: 221px; width: 623px; height: 575px; border: 1px solid #555; border-radius: 5px; background: #232323; box-shadow: 0 8px 22px rgba(0,0,0,.5); overflow: hidden; }
.dtitle { height: 36px; background: #f2f2f2; color: #8f8f8f; font-size: 14.600px; letter-spacing: -.05px; display: flex; align-items: center; justify-content: space-between; padding: 0 0 2px 9px; }
.dtitle b { width: 25px; height: 25px; background: #dadada; color: #fafafa; text-align: center; line-height: 22px; margin-top: 5px; font-weight: 400; }
.dpresets { display: grid; grid-template-columns: 52px 273px 32px 26px 14px 170px 24px; margin: 0 17px 0 18px; height: 56px; padding-top: 6px; align-items: center; border-bottom: 1px solid #303030; }
.dpresets .box { width: 257px; }
.algo { display: grid; grid-template-columns: 72px 161px 66px 99px; padding: 20px 0 0 37px; align-items: center; }
.algo .box:nth-child(2) { width: 138px; }
.group { border: 1px solid #303030; border-radius: 2px; margin-left: 26px; width: 570px; }
.legend { display: block; width: max-content; height: 20px; margin: -11px 0 0 8px; padding: 0 3px; background: #232323; }
.g1 { height: 98px; margin-top: 23px; }
.durs { display: grid; grid-template-columns: 128px 225px 100px 60px; padding: 15px 0 0 16px; }
.check { display: flex; gap: 5px; align-items: center; padding: 16px 0 0 13px; }
.check i { width: 17px; height: 17px; border: 2px solid #8f8f8f; border-radius: 2px; }
.g2 { height: 153px; margin-top: 22px; }
.g2 .check { gap: 4px; padding: 17px 0 0 12px; }
.slide { display: grid; grid-template-columns: 145px 27px 200px 67px 60px; margin-top: 6px; height: 36px; align-items: start; }
.slide .sl { text-align: right; }
.slide svg { grid-column: 3; }
.slide .val { text-align: right; }
.slide > span { padding-top: 10px; }
.slide > span:last-child { padding-left: 3px; }
.tiny text { font-size: 11.500px; fill: #8f8f8f; text-anchor: middle; }
.g2 .check + .slide { margin-top: 11px; }
.adv { display: grid; grid-template-columns: 24px 80px; padding: 12px 0 27px 16px; margin: 0 17px 0 18px; border-bottom: 1px solid #303030; align-items: center; color: #c4c4c4; }
.inout { padding: 13px 0 0 20px; }
.dfoot { display: flex; align-items: center; padding: 7px 0 0 19px; }
.green { width: 23px; height: 23px; background: #2f9f6c; border-radius: 2px; display: flex; align-items: center; justify-content: center; color: #c0d8cc; }
.dplay { margin-left: 22px; color: #b0b0b0; }
.dloop { margin: 0 265px 0 17px; width: 34px; background: #161616; color: #2d8ceb; }
.pill { width: 100px; height: 25px; border: 2px solid #8a8a8a; border-radius: 13px; text-align: center; line-height: 20px; margin-right: 12px; color: #9a9a9a; }
svg text { letter-spacing: 0; }
```
FILE: app.js
```js
const PX_PER_SEC = 32.13, WAVE_W = 1325;

// Peak envelopes as [x, amplitude] pairs; amplitude 54 fills a channel.
const TOP = [0,0,9,1,19,4,29,7,40,10,48,14,56,20,66,25,78,20,89,22,99,25,102,10,105,5,108,22,113,14,116,8,116.5,28,123,28,129,30,135,22,144,17,149,42,156,34,164,27,176,22,184,18,193,25,201,20,209,26,217,18,225,34,230,28,248,20,300,23,369,20,385,11,410,11,415,22,500,20,551,26,552,50,650,47,760,50,871,44,883,40,900,20,904,24,921,40,946,50,967,52,984,36,1009,35,1022,48,1043,40,1068,48,1093,38,1110,45,1121,32,1136,45,1157,33,1176,50,1190,27,1203,30,1207,45,1220,34,1232,40,1253,42,1270,37,1283,22,1287,15,1300,7,1314,2,1319,0,1326,0];
const BOT = [0,0,19,3,29,6,42,13,56,14,66,17,78,13,99,14,103,6,106,4,109,17,113,14,116,10,117,22,123,29,127,22,131,18,144,17,149,33,156,33,162,38,168,27,176,20,193,18,225,22,230,30,248,18,369,17,385,10,410,10,415,19,551,22,552,46,760,44,871,44,883,35,900,22,908,20,915,36,946,40,963,48,988,34,1043,38,1110,30,1136,42,1161,38,1178,33,1203,26,1211,32,1230,43,1253,37,1270,28,1283,14,1300,7,1316,1,1326,0];

function envAt(points, x) {
  for (let i = 2; i < points.length; i += 2) {
    if (x <= points[i]) {
      const t = (x - points[i - 2]) / (points[i] - points[i - 2] || 1);
      return points[i - 1] + t * (points[i + 1] - points[i - 1]);
    }
  }
  return 0;
}
function noise(n) { const s = Math.sin(n * 12.9898) * 43758.5453; return s - Math.floor(s); }
function peak(points, x, seed) {
  const e = envAt(points, x);
  const step = Math.floor(x / 1.7);
  let v = e * (0.84 + 0.24 * noise(step + seed));
  const r = noise(step * 1.7 + seed * 3);
  if (e > 26 && x > 550 && x < 1270) { if (r < 0.2) v += 22 * noise(step + 9); else if (r > 0.9) v -= 12; }
  else if (e > 15 && r > 0.92) v += 5;
  return Math.min(54, Math.max(0.5, v));
}
function wavePath(cx, cy, width, scale, limit, seed) {
  let up = '', down = '';
  for (let x = 0; x < width; x++) {
    const src = x * WAVE_W / width;
    const a = Math.min(limit, peak(TOP, src, seed) * scale);
    const b = Math.min(limit, peak(BOT, src, seed + 50) * scale);
    up += `L${cx + x} ${(cy - a).toFixed(1)}H${cx + x + 1}`;
    down = `L${cx + x + 1} ${(cy + b).toFixed(1)}H${cx + x}` + down;
  }
  return `M${cx} ${cy}${up}${down}Z`;
}

document.querySelectorAll('[data-overview]').forEach(el => {
  const dim = el.dataset.overview === 'dim';
  const bg = dim ? '#232323' : '#f7f7ff', line = dim ? '#353535' : '#6b6b6b', fill = dim ? '#44514b' : '#3c574b';
  el.innerHTML = `<rect x="3" y="1" width="1325" height="36" rx="3" fill="${bg}" stroke="${line}" stroke-width="2.500"/>
    <path d="${wavePath(5, 9.5, 1321, .155, 7.6, 1)}${wavePath(5, 27.5, 1321, .155, 7.6, 7)}" fill="${fill}"/>
    ${dim ? '' : '<path d="M743.500 3v32" stroke="#b33"/>'}
    ${[1, 1321].map(x => `<rect x="${x}" y="4" width="7" height="30" rx="3" fill="${dim ? '#2b2b2b' : '#4a4a4a'}" stroke="${line}" stroke-width="1.500"/>`).join('')}`;
});

document.querySelectorAll('[data-ruler]').forEach(el => {
  const dim = el.dataset.ruler === 'dim';
  const ink = dim ? '#4a4a4a' : '#7f938a';
  let s = `<rect x="7.500" y=".5" width="1326.500" height="31" fill="${dim ? '#232323' : '#273d35'}" stroke="${dim ? '#181818' : '#000'}" stroke-width="1.500"/>`;
  for (let t = 1; t <= 41; t++) {
    if (dim && t > 8 && t < 27) continue; // behind the effect window
    const x = Math.round(8 + t * PX_PER_SEC) + .5;
    s += `<path d="M${x} ${t % 5 ? 26 : 21}V31" stroke="${ink}"/>`;
    if (t % 5 === 0) s += `<text x="${x}" y="${dim ? 17 : 18}" text-anchor="middle" font-size="14" fill="${ink}">${t},0</text>`;
  }
  s += `<text x="11" y="${dim ? 17 : 18}" font-size="14" fill="${ink}">hms</text><path d="M1 16h14v7l-7 6-7-6z" fill="${dim ? '#223446' : '#265f96'}"/><path d="M8.500 ${dim ? 21 : 2}V31" stroke="${dim ? '#555' : '#cdd8d3'}"/>`;
  if (!dim) s += '<path d="M665.500 20v8M668.500 20v8M671.500 20v8M674.500 20v8" stroke="#8fa39a"/><path d="M1332.500 3v12M1332.500 19v12" stroke="#9fb0a8"/>';
  el.innerHTML = s;
});

document.querySelectorAll('[data-wave]').forEach(el => {
  const dim = el.dataset.wave === 'dim';
  const grid = dim ? '#15291a' : '#cfe6cf', ink = dim ? '#484848' : '#9a9a9a', edge = dim ? '#181818' : '#000';
  let s = `<rect width="1419" height="222" x=".5" y=".5" fill="#232323" stroke="${edge}"/>
    <rect x="1" y="1" width="1326" height="221" fill="${dim ? '#181818' : '#f5f5ff'}"/>`;
  [16.5, 36.5, 73.5, 93.5, 126.5, 146.5, 183.5, 203.5].forEach(y => s += `<path d="M2 ${y}H1326" stroke="${grid}"/>`);
  for (let t = 5; t < 42; t += 5) s += `<path d="M${Math.round(2 + t * PX_PER_SEC) + .5} 1V219" stroke="${grid}"/>`;
  s += `<path d="${wavePath(2, 55, 1324, 1, 54, 3)}${wavePath(2, 165, 1324, 1, 54, 21)}" fill="${dim ? '#3c4842' : '#294338'}"/>`;
  if (!dim) s += '<path d="M2 55.500H1326M2 165.500H1326" stroke="#182a22"/>';
  s += `<path d="M1 109.500H1326" stroke="${dim ? '#484848' : '#777'}" stroke-width="1.200"/><path d="M1327 110H1419" stroke="${edge}" stroke-width="1.500"/>
    <path d="M2.500 1V222" stroke="${dim ? '#4a1c1c' : '#c33'}" stroke-dasharray="3 2"/>`;
  if (!dim) s += `<path d="M1 220.500H1327" stroke="#000" stroke-width="3"/>
    <rect x="17" y="4" width="14" height="13" fill="#b5b5b5"/><path d="M18 16h12V5z" fill="#4a4a4a"/>
    <rect x="1298" y="4" width="14" height="13" fill="#b5b5b5"/><path d="M1299 16V5l11 11z" fill="#4a4a4a"/>`;
  const up = dim ? 1 : 0;
  [0, 110].forEach((o, i) => {
    [['dB', 16], ['-9', 41], ['-∞', 61], ['-9', 79], ['-3', 99]].forEach(([t, y]) => s += `<text x="1338" y="${y + o - up}" font-size="13.500" fill="${ink}">${t}</text>`);
    [3, 6, 9, 12, 21, 24, 27, 30, 33, 76, 79, 82, 85, 88, 91, 98, 102, 106].forEach(y => s += `<path d="M1328 ${y + o + .5}h3" stroke="${ink}"/>`);
    [16, 36, 55, 73, 93].forEach(y => s += `<path d="M1328 ${y + o + .5}h5" stroke="${ink}"/>`);
    s += `<rect x="1389.500" y="${45.5 + o}" width="26" height="21" rx="2" fill="${dim ? '#1f1f1f' : '#161616'}" stroke="#2a2a2a"/><text x="1402.500" y="${61 + o}" text-anchor="middle" font-size="13" fill="${dim ? '#24496e' : '#2d8ceb'}">${i ? 'R' : 'L'}</text>`;
  });
  s += `<rect x=".5" y="222.500" width="1419" height="11" fill="${dim ? '#292929' : '#333'}" stroke="${edge}"/><path d="M1391 229l3.500-3.500 3.500 3.500z" fill="${dim ? '#444' : '#888'}"/>`;
  if (dim) s += '<path d="M695 226.500h29M695 229.500h29" stroke="#484848" stroke-dasharray="1 1"/>';
  el.innerHTML = s;
});

document.getElementById('rackRows').innerHTML = Array.from({ length: 10 }, (_, i) =>
  `<div class="rrow"><span${i === 9 ? ' class="ten"' : ''}>${i + 1}</span><div class="pw"><svg width="16" height="16"><use href="#power"/></svg></div><div class="ar"><svg width="7" height="11" viewBox="0 0 7 11"><path d="M0 0l7 5.500L0 11z" fill="currentColor"/></svg></div></div>`).join('');

// Input and output meters with their dB scale, then the dry/wet slider.
(() => {
  const label = (x, y, t, size = 14, anchor = 'start', c = '#464646') => `<text x="${x}" y="${y}" font-size="${size}" text-anchor="${anchor}" fill="${c}">${t}</text>`;
  let s = '';
  [['Input:', 10], ['Output:', 40]].forEach(([t, y]) => {
    s += label(58, y + 14, t, 13.6, 'end');
    for (let i = 0; i < 7; i++) s += `<path d="M${63.5 + i * 3} ${y + 16}v${-2 - i * 2.5}" stroke="#484848" stroke-width="1.500"/>`;
    s += `<circle cx="99" cy="${y + 10}" r="10.500" fill="none" stroke="#464646" stroke-width="2"/><path d="M99 ${y}v9" stroke="#464646" stroke-width="2"/>` + label(116, y + 14, '+0');
    s += `<rect x="179.500" y="${y + .5}" width="207" height="21" fill="#1d1d1d" stroke="#000" stroke-width="1.500"/><path d="M375.500 ${y}v22M376 ${y + 11}h11" stroke="#000" stroke-width="1.500"/><path d="M181.500 ${y + 2}v8M181.500 ${y + 12}v8" stroke="#ee0" stroke-width="1.600"/>`;
  });
  for (let i = 0; i <= 30; i++) s += `<path d="M${(181.5 + i * 6.37).toFixed(1)} 63v${i % 6 ? 2 : 5}" stroke="#8f8f8f"/>`;
  [['dB', 186], ['-48', 221], ['-36', 259], ['-24', 297], ['-12', 335], ['0', 373]].forEach(([t, x]) => s += label(x, 80, t, 11.5, 'middle', '#8f8f8f'));
  s += label(33, 107, 'Mix:') + label(79, 106, 'Dry') + '<path d="M114 100.500h163" stroke="#464646" stroke-width="2.500"/><circle cx="287" cy="100.500" r="5" fill="none" stroke="#464646" stroke-width="2"/>' + label(300, 106, 'Wet') + label(346, 106, '100 %') + '<path d="M6 119.500h390" stroke="#303030"/>';
  document.getElementById('ioMeters').innerHTML = s;
})();

(() => {
  let s = '<rect x="6.500" y="5.500" width="1144" height="53" fill="#1d1d1d" stroke="#000" stroke-width="1.600"/><path d="M9 7v25M9 34v24" stroke="#c3c316" stroke-width="2"/><path d="M1138 6.500h12v25h-12zM1138 33.500h12v24h-12z" fill="#fa4545"/>';
  for (let i = 0; i <= 60; i++) {
    const x = 9.5 + i * 18.77;
    s += `<path d="M${x.toFixed(1)} 59v${i % 3 ? 2 : 5}" stroke="#8f8f8f"/>`;
    if (i % 3 === 0) s += `<text x="${i ? x : 14}" y="78" font-size="11.500" text-anchor="middle" fill="#8f8f8f">${i ? i - 60 : 'dB'}</text>`;
  }
  document.getElementById('levelMeter').innerHTML = s;
})();

// Zoom buttons: [centre x, mark beside the lens, sign in the lens, enabled]
document.getElementById('zoomIcons').innerHTML = [[11, 'v', '+', 1], [48, 'v', '-', 1], [85, 'h', '+', 1], [123, 'h', '-', 0], [160, 'n', '', 0], [197, '{', '', 1], [235, '}', '', 1], [270, '{}', '', 0], [308, 't', '', 1], [346, 'v', '+', 0]].map(([x, mark, sign, on]) => {
  const c = on ? '#b0b0b0' : '#464646';
  if (mark === 'n') return `<svg x="${x - 11}" y="1" width="22" height="22" color="${c}"><use href="#navz"/></svg>`;
  if (mark === 't') return `<g fill="none" stroke="${c}" stroke-width="2"><circle cx="${x}" cy="15" r="7"/><path d="M${x} 2v6M${x - 3} 3h6M${x - 8} 9l3-4M${x - 8} 5l4 4"/></g><path d="M${x} 15V9a6 6 0 0 1 5 4z" fill="${c}"/>`;
  const brace = mark[0] === '{' || mark === '}';
  const lx = mark === 'v' ? x + 2 : mark === 'h' ? x : x + 4, ly = mark === 'h' ? 14 : brace ? 13 : 11;
  let g = `<circle cx="${lx}" cy="${ly}" r="5.500"/><path d="M${lx + 4} ${ly + 4}l5 ${brace ? 5 : 6}"/>`;
  if (sign) g += `<path d="M${lx - 3} ${ly}h6${sign === '+' ? `M${lx} ${ly - 3}v6` : ''}"/>`;
  if (mark === 'v') g += `<path d="M${x - 8} 3v18M${x - 10.5} 5l2.500-3 2.500 3M${x - 10.5} 19l2.500 3 2.500-3"/>`;
  if (mark === 'h') g += `<path d="M${x - 10} 3.500h20M${x - 8} 1l-3 2.500 3 2.500M${x + 8} 1l3 2.500-3 2.500"/>`;
  if (mark[0] === '{') g += `<path d="M${x - 8} 6v5l-3 2.500 3 2.500v5"/>`;
  if (mark.includes('}')) g += `<path d="M${x - 9 + mark.length * 2} 6v5l3 2.500-3 2.500v5"/>`;
  return `<g fill="none" stroke="${c}" stroke-width="1.600">${g}</g>`;
}).join('');
```
